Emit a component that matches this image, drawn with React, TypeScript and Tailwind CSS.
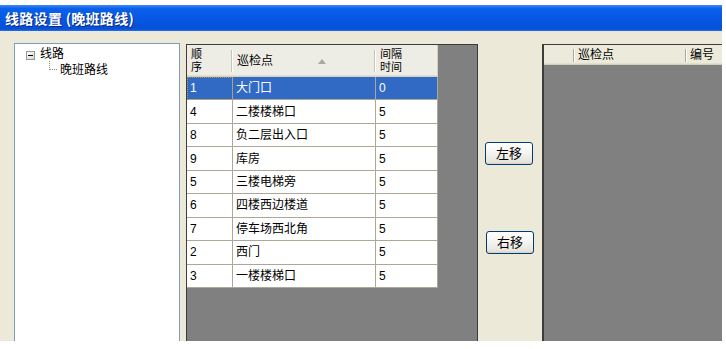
import React from 'react';

type RouteRow = { seq: string; name: string; gap: string };

const rows: RouteRow[] = [
  { seq: '1', name: '大门口', gap: '0' },
  { seq: '4', name: '二楼楼梯口', gap: '5' },
  { seq: '8', name: '负二层出入口', gap: '5' },
  { seq: '9', name: '库房', gap: '5' },
  { seq: '5', name: '三楼电梯旁', gap: '5' },
  { seq: '6', name: '四楼西边楼道', gap: '5' },
  { seq: '7', name: '停车场西北角', gap: '5' },
  { seq: '2', name: '西门', gap: '5' },
  { seq: '3', name: '一楼楼梯口', gap: '5' },
];

function TreePanel() {
  return (
    <div className="ml-[14px] w-[166px] self-stretch bg-white border-t border-l border-r border-[#7F9DB9] pt-[2px] text-[12px] text-black">
      <div className="flex items-center h-[16px] pl-[11px]">
        <span className="mt-[3px] w-[9px] h-[9px] border border-[#919B9C] bg-[linear-gradient(135deg,#ffffff,#d8d6cc)] flex items-center justify-center">
          <span className="block w-[5px] h-[1px] bg-black" />
        </span>
        <span className="ml-[5px] leading-[16px]">线路</span>
      </div>
      <div className="flex items-start pl-[34px]">
        <span className="mt-[-1px] w-[8px] h-[9px] border-l border-b border-dotted border-[#8a8a8a]" />
        <span className="ml-[3px] leading-[16px]">晚班路线</span>
      </div>
    </div>
  );
}

function HeaderCell({ w, children, last }: { w: string; children: React.ReactNode; last?: boolean }) {
  return (
    <div className={`${w} h-full flex items-center pl-[4px]`}>
      {children}
      {!last && <span className="ml-auto self-center w-[2px] h-[22px] border-l border-[#C7C5B2] border-r border-r-white" />}
      {last && <span className="ml-auto self-stretch w-[1px] bg-[#D4D0C8]" />}
    </div>
  );
}

function RouteTable() {
  return (
    <div className="ml-[6px] mt-[1px] w-[292px] self-stretch bg-[#808080] border-t border-l border-r border-[#3c3c3c]">
      <div className="w-[251px] text-[12px] text-black">
        <div className="flex h-[32px] bg-[#EEEDE5] shadow-[inset_0_-1px_0_#D4D1C2,inset_0_-2px_0_#E2DFD0]">
          <HeaderCell w="w-[46px]">
            <span className="flex flex-col text-[11px] leading-[13px]">
              <span>顺</span>
              <span>序</span>
            </span>
          </HeaderCell>
          <HeaderCell w="w-[143px]">
            <span>巡检点</span>
            <span className="ml-auto mr-[3px] w-0 h-0 border-l-[4px] border-r-[4px] border-b-[5px] border-l-transparent border-r-transparent border-b-[#ACA899]" />
          </HeaderCell>
          <HeaderCell w="w-[62px]" last>
            <span className="flex flex-col text-[11px] leading-[13px]">
              <span>间隔</span>
              <span>时间</span>
            </span>
          </HeaderCell>
        </div>
        {rows.map((r, i) => {
          const sel = i === 0;
          const cell = `h-full flex items-center pl-[3px] border-r border-b border-[#ACA899] ${sel ? 'bg-[#316AC5] text-white' : 'bg-white'}`;
          return (
            <div key={r.seq} className="flex h-[23.44px]">
              <div className={`${cell} w-[46px] ${sel ? 'outline outline-1 outline-dotted outline-[#b89a40] -outline-offset-1' : ''}`}>{r.seq}</div>
              <div className={`${cell} w-[143px]`}>{r.name}</div>
              <div className={`${cell} w-[62px]`}>{r.gap}</div>
            </div>
          );
        })}
      </div>
    </div>
  );
}

function XpButton({ label, className }: { label: string; className: string }) {
  return (
    <button
      className={`${className} w-[48px] h-[23px] rounded-[3px] border border-[#003C74] bg-[linear-gradient(to_bottom,#ffffff_0%,#f4f3ee_50%,#e6e4dc_90%,#d6d0c5_100%)] text-[13px] text-black leading-none flex items-center justify-center`}
    >
      {label}
    </button>
  );
}

function RightPanel() {
  return (
    <div className="mt-[1px] w-[180px] self-stretch bg-[#808080] border-t border-l-2 border-[#3c3c3c]">
      <div className="flex h-[20px] bg-[#EBEADB] shadow-[inset_0_-1px_0_#D0CDBC,inset_0_-2px_0_#E2DFCB] text-[12px] text-black items-center">
        <div className="w-[31px] h-full flex items-center">
          <span className="ml-auto w-[2px] h-[13px] border-l border-[#ACA899] border-r border-r-white" />
        </div>
        <div className="w-[112px] h-full flex items-center pl-[3px]">
          <span>巡检点</span>
          <span className="ml-auto w-[2px] h-[13px] border-l border-[#ACA899] border-r border-r-white" />
        </div>
        <div className="flex-1 pl-[3px]">编号</div>
      </div>
    </div>
  );
}

export default function App() {
  return (
    <div className="w-[726px] h-[349px] bg-white pt-[5px] font-['Liberation_Sans','Noto_Sans_CJK_SC',sans-serif]">
      <div className="w-[722px] flex flex-col">
        <div className="h-[26px] flex items-center pl-[5px] bg-[linear-gradient(to_bottom,#3d8cf7_0%,#0a60ea_14%,#0556e2_60%,#0550d8_92%,#2a6ee6_100%)]">
          <span className="text-white font-bold text-[14px] tracking-[0.3px] [text-shadow:1px_1px_#0b2a80] font-['Noto_Sans_CJK_SC',sans-serif]">
            线路设置 (晚班路线)
          </span>
        </div>
        <div className="h-[310px] bg-[#ECE9D8] flex pt-[12px]">
          <TreePanel />
          <RouteTable />
          <div className="w-[64px] flex flex-col pt-[99px]">
            <XpButton label="左移" className="ml-[7px]" />
            <XpButton label="右移" className="ml-[8px] mt-[66px]" />
          </div>
          <RightPanel />
        </div>
      </div>
    </div>
  );
}
